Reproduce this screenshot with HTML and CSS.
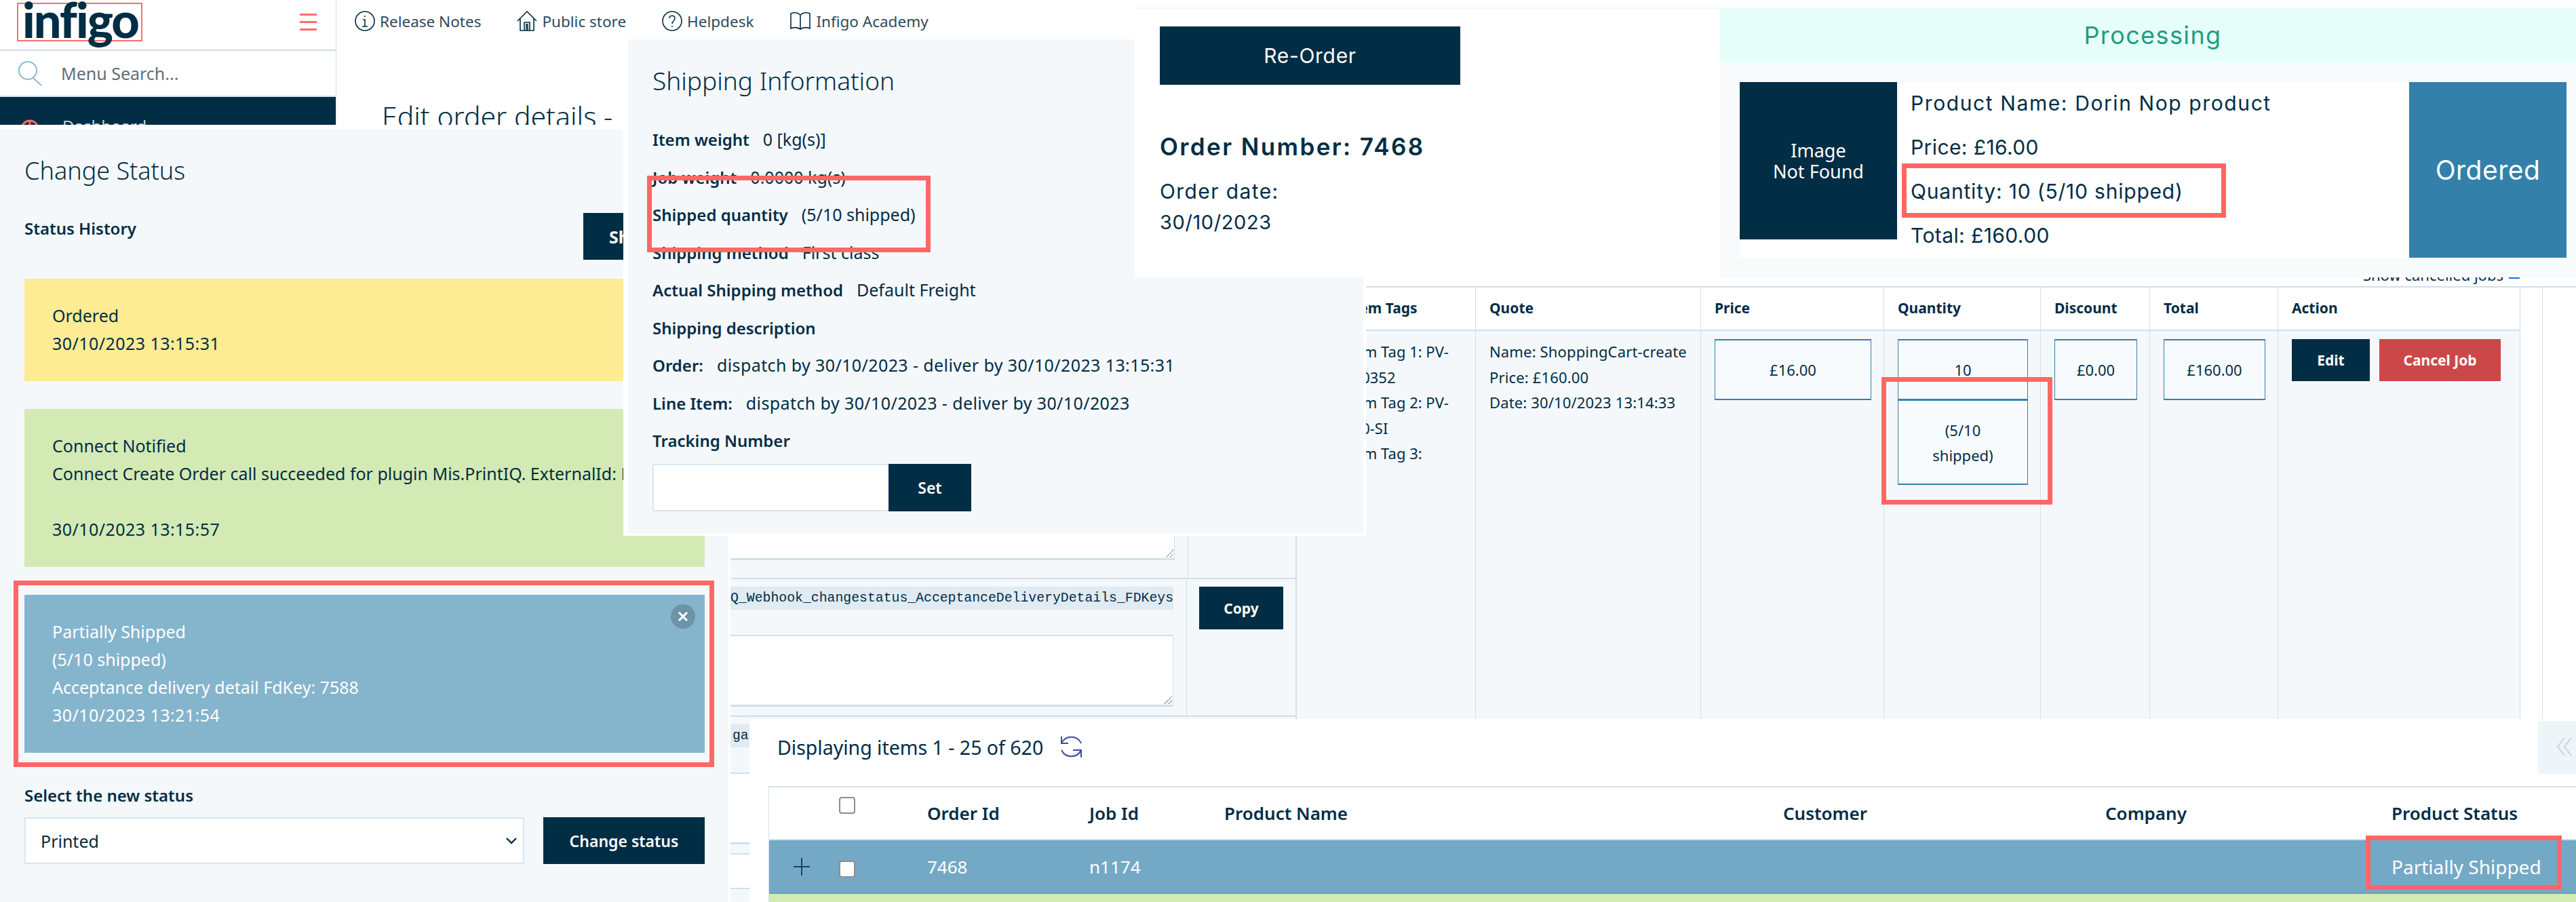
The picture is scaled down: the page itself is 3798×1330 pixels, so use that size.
FILE: index.html
```html
<!DOCTYPE html>
<html lang="en">
<head>
    <meta charset="UTF-8" />
    <title>Infigo order status collage</title>
    <link rel="stylesheet" href="styles.css">
</head>
<body>
<div class="canvas">

    <!-- admin header behind everything -->
    <div class="window app-window">
        <div class="sidebar">
            <div class="logo-row">
                <div class="logo">infigo</div>
                <div class="burger"><span></span><span></span><span></span></div>
            </div>
            <div class="search-row">
                <svg class="search-icon" width="38" height="38" viewBox="0 0 38 38"><circle cx="15" cy="15" r="13"/><path d="M23 26l12 11"/></svg>
                <span>Menu Search...</span>
            </div>
            <div class="side-nav">
                <svg width="28" height="28" viewBox="0 0 28 28"><circle cx="14" cy="14" r="12"/><path d="M14 2v24M2 14h24"/></svg>
                <span>Dashboard</span>
            </div>
        </div>
        <div class="main-area">
            <div class="topnav">
                <div class="nav-item">
                    <svg width="30" height="30" viewBox="0 0 30 30"><circle cx="15" cy="15" r="14"/><path d="M15 7v2M12 13h3v10M11 23h8"/></svg>
                    Release Notes
                </div>
                <div class="nav-item">
                    <svg width="30" height="30" viewBox="0 0 30 30"><path d="M1 15L15 1l14 14M5 12v17h20V12M11 29V17h8v12M14 29V20h2v9"/></svg>
                    Public store
                </div>
                <div class="nav-item">
                    <svg width="30" height="30" viewBox="0 0 30 30"><circle cx="15" cy="15" r="14"/><path d="M11 11c0-5 8-5 8 0 0 4-4 4-4 8M15 22v2"/></svg>
                    Helpdesk
                </div>
                <div class="nav-item">
                    <svg width="32" height="30" viewBox="0 0 32 30"><path d="M16 6C12 2 6 2 2 4v22c4-2 10-2 14 1 4-3 10-3 14-1V4c-4-2-10-2-14 2zM16 6v21"/></svg>
                    Infigo Academy
                </div>
            </div>
            <h1 class="page-title">Edit order details -</h1>
        </div>
    </div>

    <!-- job table -->
    <div class="window table-window">
        <div class="cancelled-row">
            <span>Show cancelled jobs</span>
            <span class="blue-check"></span>
        </div>
        <div class="job-table">
            <div class="th"></div>
            <div class="th"></div>
            <div class="th tags-head">Item Tags</div>
            <div class="th">Quote</div>
            <div class="th">Price</div>
            <div class="th">Quantity</div>
            <div class="th">Discount</div>
            <div class="th">Total</div>
            <div class="th">Action</div>
            <div class="edge-cell"></div>

            <div class="td attr-cell">
                <div class="attr-row first-attr">
                    <div class="attr-main"><div class="fake-area"></div></div>
                    <div class="attr-btn"></div>
                </div>
                <div class="attr-row">
                    <div class="attr-main">
                        <div class="code-line">Q_Webhook_changestatus_AcceptanceDeliveryDetails_FDKeys</div>
                        <div class="fake-area"></div>
                    </div>
                    <div class="attr-btn"><button class="btn copy-btn">Copy</button></div>
                </div>
                <div class="attr-row">
                    <div class="attr-main">
                        <div class="code-line code-left">gate_Webhook</div>
                        <div class="fake-area"></div>
                    </div>
                    <div class="attr-btn"></div>
                </div>
                <div class="attr-row plain-row"></div>
            </div>
            <div class="td"></div>
            <div class="td tags-cell">
                Item Tag 1: PV-<br>000352<br>Item Tag 2: PV-<br>000-SI<br>Item Tag 3:
            </div>
            <div class="td quote-cell">
                Name: ShoppingCart-create<br>Price: £160.00<br>Date: 30/10/2023 13:14:33
            </div>
            <div class="td input-cell"><div class="qty-box">£16.00</div></div>
            <div class="td input-cell">
                <div class="qty-box">10</div>
                <div class="qty-box shipped-box">(5/10<br>shipped)</div>
            </div>
            <div class="td input-cell"><div class="qty-box">£0.00</div></div>
            <div class="td input-cell"><div class="qty-box">£160.00</div></div>
            <div class="td action-cell">
                <button class="btn edit-btn">Edit</button>
                <button class="btn cancel-btn">Cancel Job</button>
            </div>
            <div class="edge-cell"></div>
        </div>
    </div>

    <!-- orders list -->
    <div class="window list-window">
        <div class="list-count">
            Displaying items 1 - 25 of 620
            <svg width="36" height="36" viewBox="0 0 36 36"><path d="M3 2v10h10M3 12A16 16 0 0 1 32 12"/><path d="M3 22A16 16 0 0 0 32 22M20 22h12v11"/></svg>
        </div>
        <div class="list-table">
            <div class="list-row list-head">
                <span></span>
                <input type="checkbox" class="tick">
                <span>Order Id</span>
                <span>Job Id</span>
                <span>Product Name</span>
                <span>Customer</span>
                <span>Company</span>
                <span>Product Status</span>
            </div>
            <div class="list-row list-item">
                <svg class="plus" width="24" height="26" viewBox="0 0 24 26"><path d="M12 0v26M0 13h24"/></svg>
                <input type="checkbox" class="tick">
                <span>7468</span>
                <span>n1174</span>
                <span></span>
                <span></span>
                <span></span>
                <span class="list-status">Partially Shipped</span>
            </div>
            <div class="list-next"></div>
        </div>
    </div>

    <div class="window collapse-tab">
        <svg width="30" height="28" viewBox="0 0 30 28"><path d="M13 1L3 14l10 13M23 1L13 14l10 13"/></svg>
    </div>

    <!-- change status modal -->
    <div class="window status-window">
        <h2>Change Status</h2>
        <div class="history-head">
            <b>Status History</b>
            <button class="btn history-btn">Show all</button>
        </div>
        <div class="status-card card-yellow">Ordered<br><span class="stamp">30/10/2023 13:15:31</span></div>
        <div class="status-card card-green">Connect Notified<br>Connect Create Order call succeeded for plugin Mis.PrintIQ. ExternalId: PV-000352<br><br><span class="stamp">30/10/2023 13:15:57</span></div>
        <div class="status-card card-blue">
            Partially Shipped<br>(5/10 shipped)<br>Acceptance delivery detail FdKey: 7588<br><span class="stamp">30/10/2023 13:21:54</span>
            <span class="card-close">
                <svg width="16" height="16" viewBox="0 0 16 16"><path d="M2 2l12 12M14 2L2 14"/></svg>
            </span>
        </div>
        <div class="new-status-label">Select the new status</div>
        <div class="new-status-row">
            <div class="select-wrap">
                <select class="status-select"><option>Printed</option></select>
                <svg class="select-arrow" width="16" height="10" viewBox="0 0 16 10"><path d="M1 1l7 7 7-7"/></svg>
            </div>
            <button class="btn change-btn">Change status</button>
        </div>
    </div>

    <!-- shipping panel -->
    <div class="window shipping-window">
        <h2>Shipping Information</h2>
        <div class="ship-rows">
            <div><b>Item weight</b>0 [kg(s)]</div>
            <div><b>Job weight</b>0.0000 kg(s)</div>
            <div><b>Shipped quantity</b>(5/10 shipped)</div>
            <div><b>Shipping method</b>First class</div>
            <div><b>Actual Shipping method</b>Default Freight</div>
            <div><b>Shipping description</b></div>
            <div><b>Order:</b><span class="ship-date">dispatch by 30/10/2023 - deliver by 30/10/2023 13:15:31</span></div>
            <div><b>Line Item:</b><span class="ship-date">dispatch by 30/10/2023 - deliver by 30/10/2023</span></div>
            <div><b>Tracking Number</b></div>
        </div>
        <div class="tracking-row">
            <input type="text" class="tracking-input">
            <button class="btn set-btn">Set</button>
        </div>
    </div>

    <!-- storefront order views -->
    <div class="window order-window">
        <button class="btn reorder-btn">Re-Order</button>
        <div class="order-number">Order Number: 7468</div>
        <div class="order-date">Order date:</div>
        <div class="order-date-value">30/10/2023</div>
    </div>

    <div class="window processing-window">
        <div class="processing-head">Processing</div>
        <div class="product-card">
            <div class="no-image">Image<br>Not Found</div>
            <div class="product-info">
                <div class="wide-line">Product Name: Dorin Nop product</div>
                <div>Price: £16.00</div>
                <div class="mid-line">Quantity: 10 (5/10 shipped)</div>
                <div>Total: £160.00</div>
            </div>
            <div class="product-status">Ordered</div>
        </div>
    </div>

    <!-- red highlights drawn on the collage -->
    <div class="mark mark-ship"></div>
    <div class="mark mark-card"></div>
    <div class="mark mark-qty"></div>
    <div class="mark mark-product"></div>
    <div class="mark mark-status"></div>
</div>
</body>
</html>
```

FILE: styles.css
```css
* {
  box-sizing: border-box;
}

body {
  margin: 0;
  background: #fff;
  font-family: "Noto Sans", "Open Sans", sans-serif;
  color: #012d45;
}

.canvas {
  position: relative;
  width: 3798px;
  height: 1330px;
  overflow: hidden;
  background: #fff;
}

.window {
  position: absolute;
}

.btn {
  border: none;
  background: #012d45;
  color: #fff;
  font-family: inherit;
  font-weight: 700;
  padding: 0;
}

/* header */
.app-window {
  left: 0;
  top: 0;
  width: 1680px;
  height: 184px;
  display: flex;
  overflow: hidden;
}

.sidebar {
  width: 496px;
  flex: none;
  border-right: 1px solid #cfe0ec;
}

.logo-row {
  height: 75px;
  border-bottom: 2px solid #cfe0ec;
  display: flex;
  justify-content: space-between;
  align-items: flex-start;
  padding: 4px 28px 0 25px;
}

.logo {
  width: 185px;
  height: 57px;
  border: 2px solid #ff7070;
  padding-left: 6px;
  font-family: "Lato", sans-serif;
  font-weight: 900;
  font-size: 72px;
  line-height: 44px;
  letter-spacing: -2px;
}

.burger {
  width: 25px;
  margin-top: 16px;
  display: flex;
  flex-direction: column;
  gap: 8px;
}

.burger span {
  height: 3px;
  background: #ff6b6b;
}

.search-row {
  height: 68px;
  border-bottom: 2px solid #cfe0ec;
  display: flex;
  align-items: center;
  gap: 26px;
  padding-left: 26px;
  font-size: 25px;
  color: #5e6f7a;
}

.search-icon {
  fill: none;
  stroke: #8dbbd6;
  stroke-width: 2;
}

.side-nav {
  height: 41px;
  background: #012d45;
  color: #c9d6de;
  display: flex;
  align-items: flex-start;
  gap: 34px;
  padding: 33px 0 0 30px;
  font-size: 24px;
}

.side-nav svg {
  flex: none;
  fill: none;
  stroke: #ff6b6b;
  stroke-width: 3;
}

.side-nav span {
  line-height: 20px;
}

.main-area {
  flex: 1;
}

.topnav {
  height: 62px;
  display: flex;
  align-items: center;
  gap: 53px;
  padding-left: 27px;
  font-size: 22.5px;
  color: #2f4a5c;
}

.nav-item {
  display: flex;
  align-items: center;
  gap: 7px;
  white-space: nowrap;
}

.nav-item svg {
  fill: none;
  stroke: #012d45;
  stroke-width: 1.6;
}

.page-title {
  margin: 84px 0 0 67px;
  font-size: 41px;
  font-weight: 300;
  line-height: 50px;
  white-space: nowrap;
}

/* job table */
.table-window {
  left: 1074px;
  top: 392px;
  width: 2724px;
  height: 938px;
  padding-left: 3px;
  background: #fff;
}

.cancelled-row {
  width: 2639px;
  height: 30px;
  display: flex;
  justify-content: flex-end;
  gap: 7px;
  font-size: 22px;
  line-height: 26px;
}

.blue-check {
  width: 18px;
  height: 19px;
  border-radius: 3px;
  background: #0d6efd;
}

.job-table {
  display: grid;
  grid-template-columns: 835px 20px 244px 332px 270px 231px 161px 189px 357px 33px;
  grid-template-rows: 64px 844px;
  border-top: 2px solid #cfe0ec;
  font-size: 22px;
  line-height: 37.5px;
}

.th {
  display: flex;
  align-items: center;
  padding-left: 20px;
  border-right: 1px solid #cfe0ec;
  border-bottom: 2px solid #cfe0ec;
  font-size: 21px;
  font-weight: 700;
}

.td {
  padding: 12px 18px 0 20px;
  background: #f5f8fb;
  border-right: 1px solid #cfe0ec;
}

.edge-cell {
  border-right: 1px solid #cfe0ec;
}

.tags-head {
  padding-left: 55px;
}

.tags-cell {
  padding-left: 50px;
  white-space: nowrap;
}

.quote-cell {
  padding-right: 0;
  white-space: nowrap;
  letter-spacing: 0.15px;
}

.attr-cell {
  padding: 0;
  border-right: 2px solid #cfe0ec;
}

.attr-row {
  display: flex;
  border-bottom: 2px solid #cfe0ec;
}

.first-attr {
  height: 366px;
  align-items: flex-end;
}

.first-attr .fake-area {
  height: 200px;
  margin-bottom: 13px;
}

.attr-main {
  width: 675px;
  padding: 11px 19px 13px 0;
  border-right: 1px solid #cfe0ec;
  align-self: stretch;
  display: flex;
  flex-direction: column;
  justify-content: flex-end;
}

.attr-btn {
  padding: 11px 18px 0 18px;
}

.code-line {
  height: 34px;
  margin-bottom: 37px;
  background: #e0ebf3;
  font-family: "Liberation Mono", monospace;
  font-size: 19.8px;
  line-height: 34px;
  text-align: right;
  white-space: nowrap;
  overflow: hidden;
}

.code-left {
  padding-left: 3px;
  text-align: left;
}

.fake-area {
  position: relative;
  height: 106px;
  background: #fff;
  border: 1px solid #cfe0ec;
  border-width: 2px 1px 3px 0;
}

.fake-area::after {
  content: "";
  position: absolute;
  right: 1px;
  bottom: 1px;
  width: 12px;
  height: 12px;
  background: linear-gradient(135deg, transparent 50%, #777 50%, #777 58%, transparent 58%, transparent 75%, #777 75%, #777 83%, transparent 83%);
}

.plain-row {
  height: 51px;
  background: #fff;
}

.copy-btn {
  width: 124px;
  height: 63px;
  font-size: 21px;
}

.qty-box {
  height: 90px;
  display: flex;
  align-items: center;
  justify-content: center;
  text-align: center;
  background: #f8fbfd;
  border: 1px solid #3680a8;
  border-width: 2px 1px 2px 1px;
  padding-top: 2px;
}

.shipped-box {
  height: 125px;
  border-top-width: 1px;
}

.action-cell {
  display: flex;
  align-items: flex-start;
  gap: 14px;
}

.edit-btn {
  width: 115px;
  height: 62px;
  font-size: 21px;
}

.cancel-btn {
  width: 179px;
  height: 62px;
  background: #cc4747;
  font-size: 21px;
}

/* order list */
.list-window {
  left: 1105px;
  top: 1060px;
  width: 2693px;
  height: 270px;
  background: #fff;
}

.list-count {
  height: 99px;
  display: flex;
  align-items: center;
  gap: 24px;
  padding: 0 0 16px 41px;
  font-size: 28.5px;
}

.list-count svg {
  fill: none;
  stroke: #3f49a8;
  stroke-width: 2;
}

.list-table {
  margin-left: 28px;
  border-top: 2px solid #d3e2ee;
  border-left: 1px solid #cfe0ec;
}

.list-row {
  display: grid;
  grid-template-columns: 103px 130px 239px 199px 824px 475px 422px 1fr;
  align-items: center;
  font-size: 26px;
}

.list-head {
  height: 78px;
  font-weight: 600;
  border-bottom: 2px solid #cfe0ec;
  padding-bottom: 1px;
}

.list-head .tick {
  margin: 0 0 22px 0;
}

.list-item {
  height: 79px;
  background: #74a9c6;
  border-bottom: 2px solid #6a9db9;
  color: #fff;
}

.list-item .tick {
  margin: 8px 0 0 0;
}

.list-status {
  font-size: 28px;
  white-space: nowrap;
}

.tick {
  appearance: none;
  width: 24px;
  height: 25px;
  background: #fff;
  border: 2px solid #8d8d8d;
  border-radius: 4px;
}

.plus {
  margin-left: 36px;
  fill: none;
  stroke: #12465f;
  stroke-width: 2;
}

.list-next {
  height: 20px;
  background: #d4eab4;
}

.collapse-tab {
  left: 3742px;
  top: 1063px;
  width: 56px;
  height: 78px;
  padding: 24px 0 0 26px;
  background: #eff4f8;
}

.collapse-tab svg {
  fill: none;
  stroke: #bcd5e6;
  stroke-width: 2;
}

/* change status */
.status-window {
  left: 0;
  top: 191px;
  width: 1074px;
  height: 1139px;
  padding: 39px 35px 0 36px;
  background: #f5f8fb;
}

.status-window h2,
.shipping-window h2 {
  margin: 0;
  font-size: 36px;
  font-weight: 300;
  line-height: 44px;
}

.shipping-window h2 {
  font-size: 37px;
}

.history-head {
  margin-top: 40px;
  display: flex;
  justify-content: space-between;
  font-size: 24px;
  line-height: 46px;
}

.history-head b {
  font-weight: 600;
}

.history-btn {
  width: 179px;
  height: 69px;
  font-size: 25px;
}

.status-card {
  position: relative;
  margin-top: 41px;
  padding: 34px 41px 35px;
  font-size: 25px;
  line-height: 41px;
  white-space: nowrap;
}

.stamp {
  letter-spacing: 0.45px;
}

.card-yellow {
  margin-top: 28px;
  background: #fdec94;
}

.card-green {
  background: #d4eab4;
}

.card-blue {
  background: #85b4cd;
  color: #fff;
}

.card-close {
  position: absolute;
  top: 14px;
  right: 14px;
  width: 36px;
  height: 36px;
  border-radius: 50%;
  background: #6d93a8;
  display: flex;
  align-items: center;
  justify-content: center;
}

.card-close svg {
  fill: none;
  stroke: #fff;
  stroke-width: 3;
}

.new-status-label {
  margin-top: 42px;
  font-size: 24px;
  font-weight: 600;
  line-height: 41px;
}

.new-status-row {
  margin-top: 12px;
  display: flex;
  gap: 28px;
}

.select-wrap {
  position: relative;
  width: 737px;
  height: 69px;
}

.status-select {
  appearance: none;
  width: 100%;
  height: 100%;
  padding-left: 22px;
  background: #fff;
  border: 2px solid #d8e6f0;
  border-radius: 0;
  color: #012d45;
  font-family: inherit;
  font-size: 25px;
}

.select-arrow {
  position: absolute;
  right: 11px;
  top: 30px;
  fill: none;
  stroke: #012d45;
  stroke-width: 2.4;
}

.change-btn {
  width: 238px;
  height: 69px;
  font-size: 23px;
  font-weight: 600;
}

/* shipping */
.shipping-window {
  left: 919px;
  top: 51px;
  width: 1095px;
  height: 739px;
  padding: 39px 0 0 36px;
  background: #f5f8fb;
  border: solid #fff;
  border-width: 7px 4px 3px 7px;
}

.ship-rows {
  margin-top: 48px;
  display: flex;
  flex-direction: column;
  gap: 23.5px;
  font-size: 25px;
  line-height: 32px;
  white-space: nowrap;
}

.ship-rows b {
  margin-right: 20px;
  font-size: 24px;
  font-weight: 600;
  line-height: 1;
}

.ship-date {
  letter-spacing: 0.4px;
}

.tracking-row {
  margin-top: 19px;
  display: flex;
}

.tracking-input {
  width: 348px;
  height: 70px;
  background: #fff;
  border: 2px solid #d8e6f0;
  border-right: none;
}

.set-btn {
  width: 122px;
  height: 70px;
  font-size: 23px;
  font-weight: 600;
}

/* storefront */
.order-window {
  left: 1673px;
  top: 11px;
  width: 863px;
  height: 398px;
  padding: 26px 0 0 37px;
  background: #fff;
  border-top: 2px solid #f2f8fb;
  font-family: "Inter", sans-serif;
  font-size: 29px;
}

.reorder-btn {
  display: block;
  width: 443px;
  height: 86px;
  font-weight: 400;
  font-size: 30px;
  letter-spacing: 0.7px;
}

.order-number {
  margin-top: 71px;
  font-size: 35px;
  font-weight: 600;
  letter-spacing: 2.4px;
  line-height: 40px;
}

.order-date {
  margin-top: 24px;
  font-size: 30px;
  letter-spacing: 1.4px;
  line-height: 45px;
}

.order-date-value {
  letter-spacing: 0.6px;
  line-height: 45px;
}

.processing-window {
  left: 2536px;
  top: 11px;
  width: 1262px;
  height: 398px;
  background: #f9fafb;
  font-family: "Inter", sans-serif;
}

.processing-head {
  height: 81px;
  padding-left: 14px;
  background: #e6fffb;
  color: #1f9e7c;
  display: flex;
  align-items: center;
  justify-content: center;
  font-size: 36px;
  letter-spacing: 1.4px;
}

.product-card {
  margin: 29px 14px 0 29px;
  height: 259px;
  background: #fff;
  display: flex;
  align-items: flex-start;
}

.no-image {
  width: 232px;
  height: 232px;
  flex: none;
  background: #012d45;
  color: #fff;
  display: flex;
  align-items: center;
  justify-content: center;
  text-align: center;
  font-family: "Noto Sans", sans-serif;
  font-size: 27px;
  line-height: 31px;
}

.product-info {
  flex: 1;
  margin-top: -1px;
  padding-left: 20px;
  font-size: 30px;
  letter-spacing: 0.4px;
  line-height: 65px;
}

.wide-line {
  letter-spacing: 1.6px;
}

.mid-line {
  letter-spacing: 0.8px;
}

.product-status {
  width: 232px;
  height: 259px;
  flex: none;
  background: #3381ab;
  color: #fff;
  display: flex;
  align-items: center;
  justify-content: center;
  font-size: 39px;
  letter-spacing: 0.5px;
}

/* red highlights */
.mark {
  position: absolute;
  border: 7px solid #ff6666;
}

.mark-ship {
  left: 954px;
  top: 259px;
  width: 418px;
  height: 113px;
}

.mark-card {
  left: 20px;
  top: 856px;
  width: 1033px;
  height: 275px;
}

.mark-qty {
  left: 2774px;
  top: 556px;
  width: 252px;
  height: 188px;
}

.mark-product {
  left: 2804px;
  top: 241px;
  width: 478px;
  height: 80px;
}

.mark-status {
  left: 3488px;
  top: 1232px;
  width: 289px;
  height: 80px;
}
```
